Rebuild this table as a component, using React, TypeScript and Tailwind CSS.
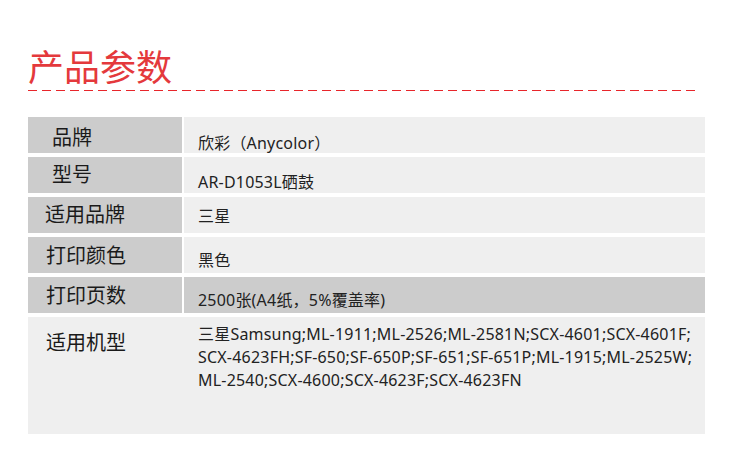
const rows = [
  { label: "品牌", value: "欣彩（Anycolor）", lpl: "pl-[24px]", lpt: "pt-[10px]", vpt: "pt-[14px]", h: "h-[36px]", dark: false },
  { label: "型号", value: "AR-D1053L硒鼓", lpl: "pl-[24px]", lpt: "pt-[7px]", vpt: "pt-[13px]", h: "h-[36px]", dark: false },
  { label: "适用品牌", value: "三星", lpl: "pl-[17px]", lpt: "pt-[7px]", vpt: "pt-[7px]", h: "h-[36px]", dark: false },
  { label: "打印颜色", value: "黑色", lpl: "pl-[18px]", lpt: "pt-[8px]", vpt: "pt-[11px]", h: "h-[36px]", dark: false },
  { label: "打印页数", value: "2500张(A4纸，5%覆盖率)", lpl: "pl-[18px]", lpt: "pt-[8px]", vpt: "pt-[11px]", h: "h-[36px]", dark: true },
]

const models = [
  "三星Samsung;ML-1911;ML-2526;ML-2581N;SCX-4601;SCX-4601F;",
  "SCX-4623FH;SF-650;SF-650P;SF-651;SF-651P;ML-1915;ML-2525W;",
  "ML-2540;SCX-4600;SCX-4623F;SCX-4623FN",
]

export default function App() {
  return (
    <div className="w-[750px] h-[470px] bg-white pt-[47px] font-['Noto_Sans','Noto_Sans_CJK_SC',sans-serif]">
      <h1 className="ml-[28px] text-[36px] leading-none text-[#e4393c] font-['Noto_Sans_CJK_SC',sans-serif]">
        产品参数
      </h1>
      <div className="ml-[28px] mt-[7px] w-[672px] h-px bg-[repeating-linear-gradient(90deg,#e8262b_0_9px,transparent_9px_14px)]" />

      <div className="ml-[28px] mt-[26px] w-[677px] flex flex-col gap-[4px]">
        {rows.map((r, i) => (
          <div key={i} className={`flex gap-[2px] ${r.h}`}>
            <div className={`w-[154px] bg-[#cccccc] ${r.lpl} ${r.lpt}`}>
              <span className="text-[20px] leading-[20px] text-[#1a1a1a] font-['Noto_Sans_CJK_SC',sans-serif]">{r.label}</span>
            </div>
            <div className={`flex-1 pl-[14px] ${r.vpt} ${r.dark ? "bg-[#cccccc]" : "bg-[#efefef]"}`}>
              <span className="text-[16px] leading-[20px] tracking-[0.2px] text-[#222]">{r.value}</span>
            </div>
          </div>
        ))}

        <div className="flex h-[117px] bg-[#efefef]">
          <div className="w-[156px] pl-[18px] pt-[15px]">
            <span className="text-[20px] leading-[20px] text-[#1a1a1a] font-['Noto_Sans_CJK_SC',sans-serif]">适用机型</span>
          </div>
          <div className="flex-1 pl-[14px] pt-[6px] text-[16px] leading-[23px] tracking-[0.2px] text-[#222]">
            {models.map((m, i) => (
              <div key={i}>{m}</div>
            ))}
          </div>
        </div>
      </div>
    </div>
  )
}
